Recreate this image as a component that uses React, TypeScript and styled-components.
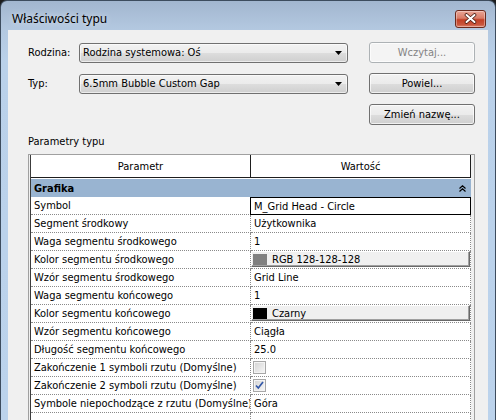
import React from "react";
import styled, { createGlobalStyle } from "styled-components";

const GlobalStyle = createGlobalStyle`
  html, body {
    margin: 0;
    padding: 0;
  }
  body {
    background: #1c1c1c;
    font-family: "DejaVu Sans Condensed", "DejaVu Sans", sans-serif;
    font-size: 11px;
    color: #000;
  }
`;

type Row = {
  name: string;
  value?: string;
  kind?: "text" | "focus" | "color" | "check";
  swatch?: string;
  checked?: boolean;
};

const rows: Row[] = [
  { name: "Symbol", value: "M_Grid Head - Circle", kind: "focus" },
  { name: "Segment środkowy", value: "Użytkownika" },
  { name: "Waga segmentu środkowego", value: "1" },
  { name: "Kolor segmentu środkowego", value: "RGB 128-128-128", kind: "color", swatch: "#808080" },
  { name: "Wzór segmentu środkowego", value: "Grid Line" },
  { name: "Waga segmentu końcowego", value: "1" },
  { name: "Kolor segmentu końcowego", value: "Czarny", kind: "color", swatch: "#000" },
  { name: "Wzór segmentu końcowego", value: "Ciągła" },
  { name: "Długość segmentu końcowego", value: "25.0" },
  { name: "Zakończenie 1 symboli rzutu (Domyślne)", kind: "check", checked: false },
  { name: "Zakończenie 2 symboli rzutu (Domyślne)", kind: "check", checked: true },
  { name: "Symbole niepochodzące z rzutu (Domyślne)", value: "Góra" },
  { name: "", value: "" },
];

const ArrowDown = () => (
  <svg width="7" height="4" viewBox="0 0 7 4">
    <path d="M0 0h7L3.5 4z" fill="#000" />
  </svg>
);

const CloseGlyph = () => (
  <svg width="13" height="11" viewBox="0 0 13 11">
    <path d="M2.5 2l8 7M10.5 2l-8 7" stroke="#4a1e14" strokeWidth="3.6" strokeLinecap="round" />
    <path d="M2.5 2l8 7M10.5 2l-8 7" stroke="#fff" strokeWidth="2" strokeLinecap="round" />
  </svg>
);

const CollapseIcon = () => (
  <svg width="7" height="7" viewBox="0 0 7 7">
    <path d="M0.5 3.5L3.5 0.8 6.5 3.5M0.5 6.5L3.5 3.8 6.5 6.5" stroke="#000" strokeWidth="1.2" fill="none" />
  </svg>
);

const CheckMark = () => (
  <svg width="9" height="9" viewBox="0 0 9 9">
    <path d="M1 4.5l2.3 2.5L8 1" stroke="#3358a8" strokeWidth="1.7" fill="none" />
  </svg>
);

const Window = styled.div`
  width: 496px;
  height: 420px;
  box-sizing: border-box;
  overflow: hidden;
  display: flex;
  flex-direction: column;
  border: 1px solid #3d4c5e;
  border-bottom: none;
  border-radius: 7px 7px 0 0;
  background: linear-gradient(180deg, #a2b6cf 0px, #b3c8e0 28px, #bad1ea 60px, #bcd3ec 100%);
`;

const TitleBar = styled.div`
  flex-shrink: 0;
  height: 29px;
  box-sizing: border-box;
  padding: 6px 9px 0 11px;
  display: flex;
  align-items: center;
  justify-content: space-between;
`;

const Title = styled.span`
  font-family: "Noto Sans", "Open Sans", sans-serif;
  font-size: 12px;
  color: #000;
  text-shadow: 0 0 6px rgba(255, 255, 255, 0.7);
`;

const CloseButton = styled.div`
  width: 31px;
  height: 18px;
  box-sizing: border-box;
  border: 1px solid #6b2a1d;
  border-radius: 3px;
  display: flex;
  align-items: center;
  justify-content: center;
  background: linear-gradient(180deg, #eaa595 0%, #d97b66 45%, #c23f25 55%, #c9563d 85%, #df8670 100%);
  box-shadow: inset 0 0 0 1px rgba(255, 255, 255, 0.35);
`;

const Client = styled.div`
  flex: 1;
  min-height: 0;
  overflow: hidden;
  margin: 0 7px;
  background: #f0f0f0;
  padding: 12px 13px 0 20px;
  display: flex;
  flex-direction: column;
`;

const TopGrid = styled.div`
  flex-shrink: 0;
  display: grid;
  grid-template-columns: 51px 269px 1fr;
  grid-auto-rows: 21px;
  row-gap: 10px;
  align-items: center;
`;

const Label = styled.span`
  line-height: 13px;
  white-space: nowrap;
`;

const Combo = styled.div`
  height: 20px;
  box-sizing: border-box;
  border: 1px solid #707070;
  border-radius: 3px;
  padding: 0 5px 0 3px;
  display: flex;
  align-items: center;
  justify-content: space-between;
  background: linear-gradient(180deg, #f2f2f2 0%, #ebebeb 50%, #dddddd 51%, #cfcfcf 100%);
  box-shadow: inset 0 0 0 1px rgba(255, 255, 255, 0.6);
`;

const Button = styled.div<{ $disabled?: boolean; $col?: number }>`
  grid-column: ${(p) => p.$col ?? 3};
  justify-self: end;
  width: 106px;
  height: 21px;
  box-sizing: border-box;
  border: 1px solid ${(p) => (p.$disabled ? "#adb2b5" : "#707070")};
  border-radius: 3px;
  display: flex;
  align-items: center;
  justify-content: center;
  color: ${(p) => (p.$disabled ? "#838383" : "#000")};
  background: ${(p) =>
    p.$disabled
      ? "#f4f4f4"
      : "linear-gradient(180deg, #f2f2f2 0%, #ebebeb 50%, #dddddd 51%, #cfcfcf 100%)"};
  box-shadow: inset 0 0 0 1px rgba(255, 255, 255, 0.7);
`;

const SectionLabel = styled.div`
  flex-shrink: 0;
  margin-top: 10px;
  line-height: 13px;
`;

const GridBox = styled.div`
  margin-top: 6px;
  flex: 1;
  min-height: 0;
  overflow: hidden;
  border: 1px solid #a0a0a0;
  border-bottom: none;
  padding: 0 2px 0 1px;
  background: #f0f0f0;
`;

const Table = styled.div`
  width: 441px;
  min-height: 100%;
  box-sizing: border-box;
  border-left: 1px solid #3c3c3c;
  background: #fff;
`;

const HeaderRow = styled.div`
  display: grid;
  grid-template-columns: 220px 220px;
  height: 23px;
  margin-bottom: 1px;
`;

const HeaderCell = styled.div`
  box-sizing: border-box;
  border-right: 1px solid #1e1e1e;
  border-bottom: 1px solid #1e1e1e;
  display: flex;
  align-items: center;
  justify-content: center;
`;

const GroupRow = styled.div`
  height: 18px;
  box-sizing: border-box;
  background: #99b4d1;
  display: flex;
  align-items: center;
  justify-content: space-between;
  padding: 0 5px 0 3px;
  font-weight: bold;
`;

const DataRow = styled.div`
  display: grid;
  grid-template-columns: 220px 220px;
  height: 18px;
`;

const NameCell = styled.div`
  box-sizing: border-box;
  border-right: 1px dotted #8a8a8a;
  border-bottom: 1px dotted #8a8a8a;
  padding-left: 3px;
  display: flex;
  align-items: center;
  white-space: nowrap;
  overflow: hidden;
`;

const ValueCell = styled.div<{ $focus?: boolean }>`
  box-sizing: border-box;
  border-right: 1px dotted #8a8a8a;
  border-bottom: 1px dotted #8a8a8a;
  ${(p) => (p.$focus ? "border: 1px solid #000; margin-left: -1px;" : "")}
  padding-left: 3px;
  display: flex;
  align-items: center;
  white-space: nowrap;
  overflow: hidden;
`;

const ColorButton = styled.div`
  flex: 1;
  height: 16px;
  margin-left: -3px;
  margin-top: -1px;
  box-sizing: border-box;
  background: #f0f0f0;
  border-top: 1px solid #ffffff;
  border-left: 1px solid #ffffff;
  border-right: 1px solid #696969;
  border-bottom: 1px solid #696969;
  box-shadow: inset -1px -1px 0 #a0a0a0;
  display: flex;
  align-items: center;
  gap: 5px;
  padding-left: 1px;
`;

const Swatch = styled.span<{ $color: string }>`
  width: 14px;
  height: 11px;
  background: ${(p) => p.$color};
`;

const CheckBox = styled.span`
  width: 13px;
  height: 13px;
  margin-left: -1px;
  box-sizing: border-box;
  border: 1px solid #a7a7a7;
  box-shadow: inset 0 0 0 1px #f4f4f4;
  background: linear-gradient(135deg, #d4d4d4 0%, #e9e9e9 60%, #f7f7f7 100%);
  display: flex;
  align-items: center;
  justify-content: center;
`;

const renderValue = (row: Row) => {
  if (row.kind === "color") {
    return (
      <ColorButton>
        <Swatch $color={row.swatch ?? "#000"} />
        {row.value}
      </ColorButton>
    );
  }
  if (row.kind === "check") {
    return <CheckBox>{row.checked && <CheckMark />}</CheckBox>;
  }
  return row.value;
};

export default function App() {
  return (
    <>
      <GlobalStyle />
      <Window>
        <TitleBar>
          <Title>Właściwości typu</Title>
          <CloseButton>
            <CloseGlyph />
          </CloseButton>
        </TitleBar>
        <Client>
          <TopGrid>
            <Label>Rodzina:</Label>
            <Combo>
              <span>Rodzina systemowa: Oś</span>
              <ArrowDown />
            </Combo>
            <Button $disabled>Wczytaj...</Button>
            <Label>Typ:</Label>
            <Combo>
              <span>6.5mm Bubble Custom Gap</span>
              <ArrowDown />
            </Combo>
            <Button>Powiel...</Button>
            <Button $col={3}>Zmień nazwę...</Button>
          </TopGrid>
          <SectionLabel>Parametry typu</SectionLabel>
          <GridBox>
            <Table>
              <HeaderRow>
                <HeaderCell>Parametr</HeaderCell>
                <HeaderCell>Wartość</HeaderCell>
              </HeaderRow>
              <GroupRow>
                <span>Grafika</span>
                <CollapseIcon />
              </GroupRow>
              {rows.map((row, i) => (
                <DataRow key={i}>
                  <NameCell>{row.name}</NameCell>
                  <ValueCell $focus={row.kind === "focus"}>{renderValue(row)}</ValueCell>
                </DataRow>
              ))}
            </Table>
          </GridBox>
        </Client>
      </Window>
    </>
  );
}
